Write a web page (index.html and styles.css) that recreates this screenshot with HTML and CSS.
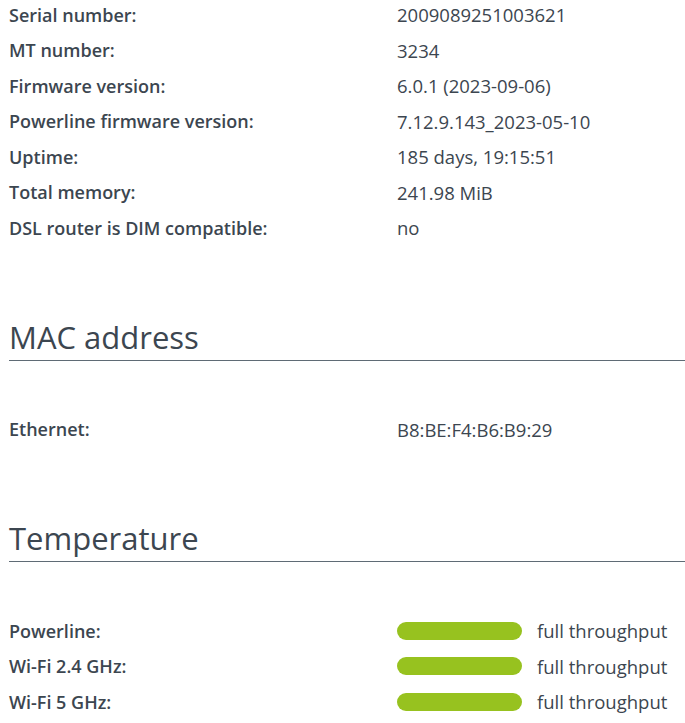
FILE: index.html
```html
<!DOCTYPE html>
<html lang="en">
<head>
    <meta charset="UTF-8">
    <meta name="viewport" content="width=device-width, initial-scale=1.0">
    <title>Device status</title>
    <link rel="stylesheet" href="styles.css">
</head>
<body>
    <div class="info first">
        <div class="row"><span class="label">Serial number:</span><span class="value">2009089251003621</span></div>
        <div class="row"><span class="label">MT number:</span><span class="value">3234</span></div>
        <div class="row"><span class="label">Firmware version:</span><span class="value">6.0.1 (2023-09-06)</span></div>
        <div class="row"><span class="label">Powerline firmware version:</span><span class="value">7.12.9.143_2023-05-10</span></div>
        <div class="row"><span class="label">Uptime:</span><span class="value">185 days, 19:15:51</span></div>
        <div class="row"><span class="label">Total memory:</span><span class="value">241.98 MiB</span></div>
        <div class="row"><span class="label">DSL router is DIM compatible:</span><span class="value">no</span></div>
    </div>

    <h2>MAC address</h2>
    <div class="info">
        <div class="row"><span class="label">Ethernet:</span><span class="value">B8:BE:F4:B6:B9:29</span></div>
    </div>

    <h2>Temperature</h2>
    <div class="info">
        <div class="row"><span class="label">Powerline:</span><span class="value"><span class="bar"></span>full throughput</span></div>
        <div class="row"><span class="label">Wi-Fi 2.4 GHz:</span><span class="value"><span class="bar"></span>full throughput</span></div>
        <div class="row"><span class="label">Wi-Fi 5 GHz:</span><span class="value"><span class="bar"></span>full throughput</span></div>
    </div>
</body>
</html>
```

FILE: styles.css
```css
body {
    margin: 0;
    padding: 0 0 0 9px;
    font-family: 'Open Sans', sans-serif;
    color: #3c4650;
    background: #fff;
    overflow: hidden;
}
.info.first {
    margin-top: -3px;
}
.row {
    display: flex;
    align-items: center;
    height: 35.5px;
    font-size: 18px;
}
.label {
    width: 388px;
    font-weight: 600;
}
.value {
    display: flex;
    align-items: center;
    font-size: 18.5px;
}
.bar {
    width: 125px;
    height: 18px;
    border-radius: 9px;
    background: #97c21f;
    margin-right: 15px;
}
h2 {
    margin: 71px 0 51px 0;
    padding-bottom: 3px;
    font-size: 31px;
    font-weight: 400;
    line-height: 40px;
    border-bottom: 1px solid #5f6b75;
}
```
